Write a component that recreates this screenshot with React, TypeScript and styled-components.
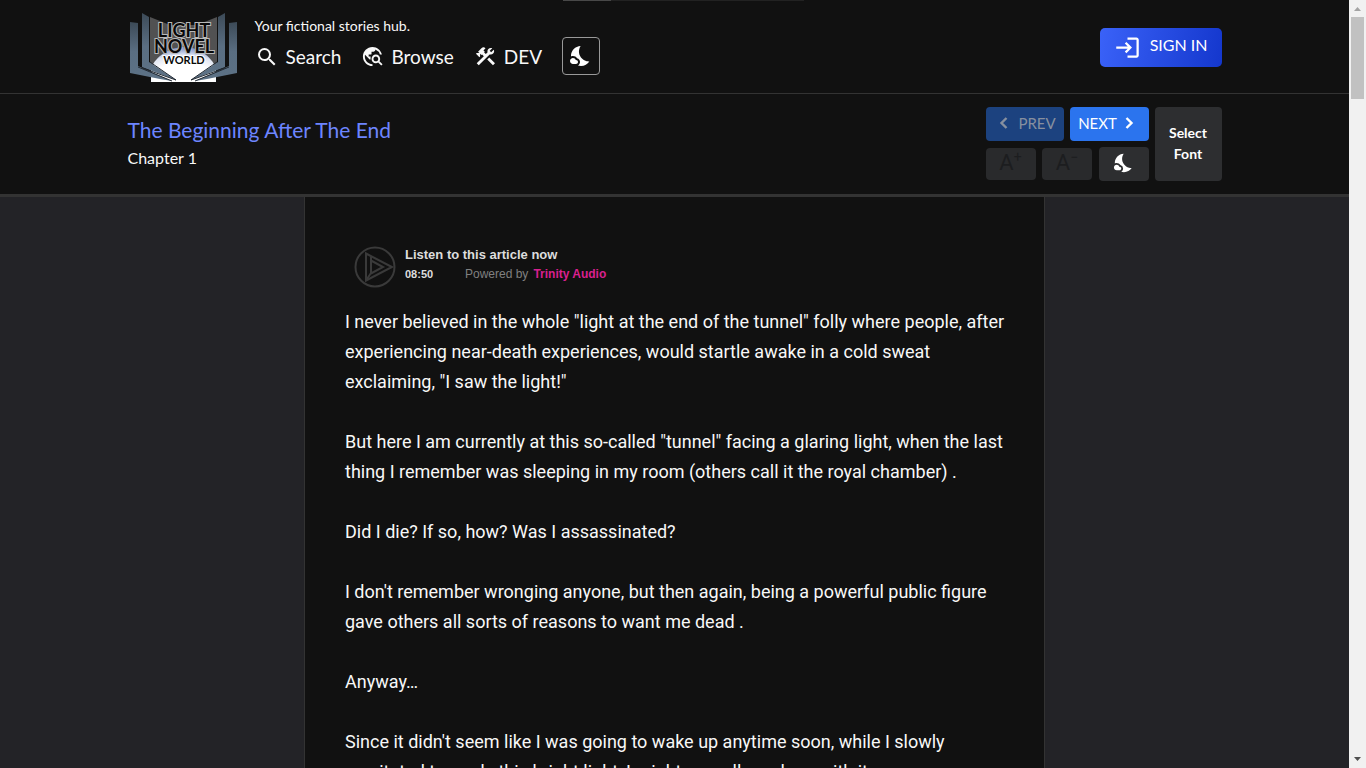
import React from "react";
import styled, { createGlobalStyle, css } from "styled-components";
import {
  MdSearch,
  MdTravelExplore,
  MdConstruction,
  MdNightsStay,
  MdLogin,
} from "react-icons/md";

const uiFont = `Lato, "Open Sans", sans-serif`;

const GlobalStyle = createGlobalStyle`
  *, *::before, *::after { box-sizing: border-box; }
  html { scrollbar-width: none; background: #232327; }
  body { margin: 0; color: #f8f8f8; font-family: ${uiFont}; }
  button { font-family: inherit; cursor: pointer; }
  a { color: inherit; text-decoration: none; }
  h1, h2, p { margin: 0; font-weight: 400; }
`;

const Page = styled.div`
  padding-right: 17px;
`;

const Container = styled.div`
  width: 100%;
  max-width: 1094px;
  margin: 0 auto;
  display: flex;
  align-items: center;
`;

const SiteHeader = styled.header`
  position: relative;
  background: #111;
  border-bottom: 1px solid #333;
  padding: 10px 0 9px;
`;

const LoadingBar = styled.div`
  position: absolute;
  top: 0;
  left: 563px;
  width: 241px;
  height: 1px;
  background: linear-gradient(90deg, #484848 48px, #222 48px);
`;

const LogoLink = styled.a`
  display: block;
  height: 74px;
`;

const Brand = styled.div`
  display: flex;
  flex-direction: column;
  gap: 3px;
  padding: 0 0 2px 15px;
`;

const Tagline = styled.p`
  font-size: 14px;
  line-height: 16px;
`;

const Nav = styled.nav`
  display: flex;
  align-items: center;
  gap: 20px;
`;

const NavLink = styled.a`
  display: flex;
  align-items: center;
  gap: 7px;
  padding-top: 2px;
  font-size: 19px;
  line-height: 24px;
`;

const ThemeToggle = styled.button`
  width: 38px;
  height: 38px;
  padding: 0;
  display: grid;
  place-items: center;
  color: #fff;
  background: #111;
  border: 1px solid #999;
  border-radius: 4px;
`;

const SignIn = styled.button`
  margin-left: auto;
  height: 39px;
  padding: 0 14px;
  display: flex;
  align-items: center;
  gap: 9px;
  color: #fff;
  font-size: 16px;
  border: 0;
  border-radius: 5px;
  background: linear-gradient(100deg, #3a62f8, #1437cd);
`;

const SignInLabel = styled.span`
  padding-bottom: 5px;
`;

const ChapterBar = styled.section`
  background: #111;
  border-bottom: 3px solid #333;
  padding: 13px 0;
`;

const Titles = styled.div`
  flex: 1;
`;

const NovelTitle = styled.h1`
  font-size: 21px;
  line-height: 28px;
  color: #6d85ff;
`;

const ChapterTitle = styled.h2`
  font-size: 16px;
  line-height: 28px;
`;

const Controls = styled.div`
  display: flex;
  gap: 6px;
`;

const ControlRows = styled.div`
  display: grid;
  gap: 6px;
`;

const ControlRow = styled.div`
  width: 163px;
  display: flex;
  align-items: center;
  justify-content: space-between;
`;

const ControlButton = styled.button<{ $kind: "prev" | "next" | "size" | "tool" | "font" }>`
  display: flex;
  align-items: center;
  justify-content: center;
  padding: 0 0 2px;
  border: 0;
  border-radius: 4px;
  color: #fff;
  background: #2d2e30;
  font-size: 15px;
  width: 50px;
  height: 34px;
  ${({ $kind }) =>
    $kind === "prev" &&
    css`
      width: 78px;
      gap: 3px;
      color: #87909f;
      background: #1c427f;
    `}
  ${({ $kind }) =>
    $kind === "next" &&
    css`
      width: 79px;
      gap: 1px;
      background: #2b74ee;
    `}
  ${({ $kind }) =>
    $kind === "size" &&
    css`
      height: 32px;
      color: #1c1d1f;
      background: #292a2c;
    `}
  ${({ $kind }) =>
    $kind === "font" &&
    css`
      width: 67px;
      height: 74px;
      font-size: 14px;
      line-height: 21px;
      font-weight: 700;
    `}
`;

const SizeGlyph = styled.span`
  font-family: Roboto, sans-serif;
  font-size: 22px;
  line-height: 24px;
  sup {
    font-size: 14px;
    line-height: 0;
  }
`;

const Article = styled.main`
  width: 100%;
  max-width: 741px;
  margin: 0 auto;
  padding: 49px 36px 40px 40px;
  background: #111;
  border: 1px solid #333;
  border-width: 0 1px;
`;

const Player = styled.section`
  display: flex;
  align-items: flex-start;
  gap: 9px;
  padding-left: 9px;
  margin-bottom: 19px;
  font-family: "Liberation Sans", Arial, sans-serif;
`;

const PlayButton = styled.button`
  width: 42px;
  height: 42px;
  padding: 0;
  border: 0;
  background: none;
`;

const PlayerTitle = styled.p`
  font-size: 13px;
  line-height: 18px;
  font-weight: 700;
  color: #ddd;
`;

const PlayerMeta = styled.p`
  display: flex;
  align-items: center;
  font-size: 12px;
  line-height: 20px;
  color: #808080;
  time {
    width: 60px;
    font-size: 11px;
    font-weight: 700;
    color: #ddd;
  }
  a {
    margin-left: 5px;
    font-weight: 700;
    color: #d9208f;
  }
`;

const Story = styled.div`
  display: grid;
  gap: 30px;
  font-family: Roboto, sans-serif;
  font-size: 18px;
  line-height: 30px;
`;

const ScrollTrack = styled.div`
  position: fixed;
  inset: 0 0 0 auto;
  width: 17px;
  background: #f1f1f1;
  display: flex;
  flex-direction: column;
  align-items: center;
`;

const ScrollThumb = styled.div`
  width: 13px;
  height: 82px;
  background: #c1c1c1;
`;

const ScrollArrow = styled.svg`
  width: 17px;
  height: 17px;
  &:last-child {
    margin-top: auto;
  }
`;

function Logo() {
  return (
    <svg width="112" height="74" viewBox="8 10 112 74" role="img" aria-label="Light Novel World">
      <defs>
        <radialGradient id="glow" cx="0.5" cy="0.9" r="0.9" fx="0.5" fy="0.9">
          <stop offset="0.5" stopColor="#fff" />
          <stop offset="0.75" stopColor="#dfe5f2" />
          <stop offset="1" stopColor="#6f86c4" />
        </radialGradient>
        <linearGradient id="cover" x1="0" y1="0" x2="0" y2="1">
          <stop offset="0" stopColor="#3c4a57" />
          <stop offset="0.5" stopColor="#5a6e82" />
          <stop offset="1" stopColor="#5d7286" />
        </linearGradient>
      </defs>
      <path d="M30 17 50 25H77L97 17V70H30Z" fill="#515152" />
      <path d="M31 82V68C36 56 50 47 64 47S91 56 96 68V82Z" fill="url(#glow)" />
      <g id="wing">
        <path d="M10 22 18 23V66L52 81 40 79 10 73Z" fill="url(#cover)" />
        <path d="M22 13 29 17V62L56 80 22 67Z" fill="url(#cover)" />
        <path d="M30 62 56 80 22 68M18 67 52 81" stroke="#222a33" fill="none" />
      </g>
      <use href="#wing" transform="translate(127 0) scale(-1 1)" />
      <g
        fontFamily="Lato, sans-serif"
        fontWeight="700"
        textAnchor="middle"
        fill="#080808"
        stroke="#b9b9b9"
        strokeWidth="2"
        paintOrder="stroke"
      >
        <text x="64" y="37" fontSize="18">LIGHT</text>
        <text x="64" y="53" fontSize="18">NOVEL</text>
        <text x="64" y="64" fontSize="11" stroke="#fff">WORLD</text>
      </g>
    </svg>
  );
}

function Chevron({ direction }: { direction: "left" | "right" }) {
  return (
    <svg width="22" height="22" viewBox="0 0 22 22" fill="none" stroke="currentColor" strokeWidth="2.4">
      <path d={direction === "left" ? "M13.500 6 8.500 11 13.500 16" : "M8.500 6 13.500 11 8.500 16"} />
    </svg>
  );
}

function PlayIcon() {
  return (
    <svg width="42" height="42" viewBox="0 0 42 42" fill="none" stroke="#3a3a3a" strokeWidth="2">
      <circle cx="21" cy="21" r="19.5" />
      <path d="M12 7.500V34.500L38 21Z" />
      <path d="M17 11V27.500L29 21L17 14.500M12 34.500 17 27" />
    </svg>
  );
}

const paragraphs = [
  `I never believed in the whole "light at the end of the tunnel" folly where people, after experiencing near-death experiences, would startle awake in a cold sweat exclaiming, "I saw the light!"`,
  `But here I am currently at this so-called "tunnel" facing a glaring light, when the last thing I remember was sleeping in my room (others call it the royal chamber) .`,
  `Did I die? If so, how? Was I assassinated?`,
  `I don't remember wronging anyone, but then again, being a powerful public figure gave others all sorts of reasons to want me dead .`,
  `Anyway…`,
  `Since it didn't seem like I was going to wake up anytime soon, while I slowly gravitated towards this bright light, I might as well go along with it.`,
];

export default function App() {
  return (
    <Page>
      <GlobalStyle />
      <SiteHeader>
        <LoadingBar />
        <Container>
          <LogoLink href="#home">
            <Logo />
          </LogoLink>
          <Brand>
            <Tagline>Your fictional stories hub.</Tagline>
            <Nav>
              <NavLink href="#search">
                <MdSearch size={24} />
                Search
              </NavLink>
              <NavLink href="#browse">
                <MdTravelExplore size={23} />
                Browse
              </NavLink>
              <NavLink href="#dev">
                <MdConstruction size={23} />
                DEV
              </NavLink>
              <ThemeToggle aria-label="Toggle dark mode">
                <MdNightsStay size={24} />
              </ThemeToggle>
            </Nav>
          </Brand>
          <SignIn>
            <MdLogin size={27} />
            <SignInLabel>SIGN IN</SignInLabel>
          </SignIn>
        </Container>
      </SiteHeader>
      <ChapterBar>
        <Container>
          <Titles>
            <NovelTitle>
              <a href="#novel">The Beginning After The End</a>
            </NovelTitle>
            <ChapterTitle>Chapter 1</ChapterTitle>
          </Titles>
          <Controls>
            <ControlRows>
              <ControlRow>
                <ControlButton $kind="prev">
                  <Chevron direction="left" />
                  PREV
                </ControlButton>
                <ControlButton $kind="next">
                  NEXT
                  <Chevron direction="right" />
                </ControlButton>
              </ControlRow>
              <ControlRow>
                <ControlButton $kind="size" aria-label="Increase font size">
                  <SizeGlyph>A<sup>+</sup></SizeGlyph>
                </ControlButton>
                <ControlButton $kind="size" aria-label="Decrease font size">
                  <SizeGlyph>A<sup>−</sup></SizeGlyph>
                </ControlButton>
                <ControlButton $kind="tool" aria-label="Night mode">
                  <MdNightsStay size={22} />
                </ControlButton>
              </ControlRow>
            </ControlRows>
            <ControlButton $kind="font">
              Select
              <br />
              Font
            </ControlButton>
          </Controls>
        </Container>
      </ChapterBar>
      <Article>
        <Player aria-label="Audio player">
          <PlayButton aria-label="Play">
            <PlayIcon />
          </PlayButton>
          <div>
            <PlayerTitle>Listen to this article now</PlayerTitle>
            <PlayerMeta>
              <time>08:50</time>
              Powered by <a href="#trinity">Trinity Audio</a>
            </PlayerMeta>
          </div>
        </Player>
        <Story>
          {paragraphs.map((text) => (
            <p key={text}>{text}</p>
          ))}
        </Story>
      </Article>
      <ScrollTrack aria-hidden="true">
        <ScrollArrow viewBox="0 0 17 17">
          <path d="M5 11H12L8.500 7Z" fill="#a3a3a3" />
        </ScrollArrow>
        <ScrollThumb />
        <ScrollArrow viewBox="0 0 17 17">
          <path d="M5 6H12L8.500 10Z" fill="#505050" />
        </ScrollArrow>
      </ScrollTrack>
    </Page>
  );
}
